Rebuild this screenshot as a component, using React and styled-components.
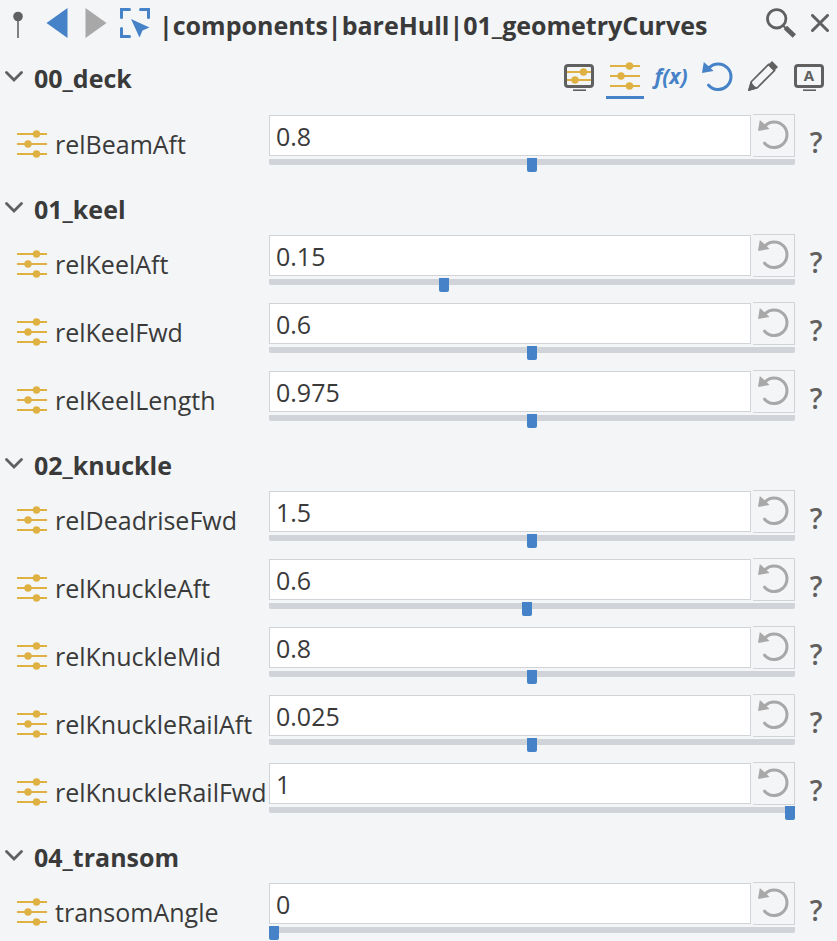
import { useState } from "react";
import styled, { createGlobalStyle } from "styled-components";

const colors = {
  background: "#f3f5f7",
  text: "#3a3a3a",
  icon: "#606060",
  muted: "#a8a8a8",
  line: "#d0d4d9",
  blue: "#4682c8",
  yellow: "#dfb142",
};

const groups = [
  {
    name: "00_deck",
    params: [{ name: "relBeamAft", value: "0.8", position: 50 }],
  },
  {
    name: "01_keel",
    params: [
      { name: "relKeelAft", value: "0.15", position: 33 },
      { name: "relKeelFwd", value: "0.6", position: 50 },
      { name: "relKeelLength", value: "0.975", position: 50 },
    ],
  },
  {
    name: "02_knuckle",
    params: [
      { name: "relDeadriseFwd", value: "1.5", position: 50 },
      { name: "relKnuckleAft", value: "0.6", position: 49 },
      { name: "relKnuckleMid", value: "0.8", position: 50 },
      { name: "relKnuckleRailAft", value: "0.025", position: 50 },
      { name: "relKnuckleRailFwd", value: "1", position: 100 },
    ],
  },
  {
    name: "04_transom",
    params: [{ name: "transomAngle", value: "0", position: 0 }],
  },
];

const PinIcon = () => (
  <svg width="12" height="30" viewBox="0 0 12 30">
    <path d="M6 8V30" stroke="#808080" strokeWidth="2" />
    <circle cx="6" cy="8.5" r="4.8" fill={colors.icon} />
  </svg>
);

const TriangleIcon = ({ forward }) => (
  <svg width="22" height="30" viewBox="0 0 22 30">
    {forward ? (
      <path d="M0.5 0L21.5 15L0.5 30Z" fill={colors.muted} />
    ) : (
      <path d="M21.5 0L0.5 15L21.5 30Z" fill={colors.blue} />
    )}
  </svg>
);

const PickIcon = () => (
  <svg width="30" height="30" viewBox="0 0 30 30">
    <path
      d="M1.5 9.5V1.5H9.5M20.5 1.5H28.5V9.5M1.5 20.5V28.5H9.5"
      fill="none"
      stroke={colors.blue}
      strokeWidth="3"
      strokeLinecap="round"
    />
    <path d="M11 11L29.5 19.5L22.5 22.5L19.5 29.5Z" fill={colors.blue} />
  </svg>
);

const SearchIcon = () => (
  <svg width="30" height="30" viewBox="0 0 30 30">
    <circle cx="10.7" cy="10.8" r="9.2" fill="none" stroke={colors.icon} strokeWidth="2.8" />
    <path d="M17 17.5L20 20.5" stroke={colors.icon} strokeWidth="2" />
    <path d="M19.4 19.6L28.3 28" stroke={colors.icon} strokeWidth="4.8" />
  </svg>
);

const CloseIcon = () => (
  <svg width="18" height="18" viewBox="0 0 18 18">
    <path
      d="M1.5 1.5L16.5 16.5M16.5 1.5L1.5 16.5"
      stroke={colors.icon}
      strokeWidth="3"
      strokeLinecap="round"
    />
  </svg>
);

const ChevronIcon = ({ open }) => (
  <svg width="18" height="12" viewBox="0 0 18 12">
    <path
      d={open ? "M1.5 1.5L9 9L16.5 1.5" : "M5 0L11 6L5 12"}
      fill="none"
      stroke={colors.icon}
      strokeWidth="2.8"
      strokeLinecap="round"
    />
  </svg>
);

const SlidersIcon = () => (
  <svg width="30" height="30" viewBox="0 0 30 30">
    <path d="M0 5H30M0 15H30M0 25H30" stroke={colors.yellow} strokeWidth="2" />
    <g fill={colors.yellow}>
      <circle cx="19.5" cy="5" r="3.7" />
      <circle cx="11" cy="15" r="3.7" />
      <circle cx="19.5" cy="25" r="3.7" />
    </g>
  </svg>
);

const MonitorIcon = ({ children }) => (
  <svg width="30" height="30" viewBox="0 0 30 30">
    {children}
    <rect x="1.5" y="4.5" width="27" height="21" rx="2.5" fill="none" stroke={colors.icon} strokeWidth="3" />
    <path d="M9 29.2H22" stroke={colors.icon} strokeWidth="1.6" />
  </svg>
);

const UndoIcon = ({ color }) => (
  <svg width="31" height="30" viewBox="0 0 31 30">
    <path
      d="M7 6.8A12.8 12.8 0 1 1 6.6 24.2"
      fill="none"
      stroke={color}
      strokeWidth="3"
      strokeLinecap="round"
    />
    <path d="M1.8 1L0 12L11.5 10L7.5 6Z" fill={color} />
  </svg>
);

const PencilIcon = () => (
  <svg width="30" height="30" viewBox="0 0 30 30">
    <path
      d="M3.5 20.5L20.5 3.5L26.5 9.5L9.5 26.5L1 29Z"
      fill="none"
      stroke={colors.icon}
      strokeWidth="1.7"
    />
    <path d="M0 30L2.6 20.5L9.6 27.4Z" fill={colors.icon} />
    <path d="M4.8 20.5L9.5 25.2L7 25.5L4.6 23Z" fill={colors.background} />
    <path d="M20 4L24 0L30 6L26 10Z" fill={colors.icon} />
  </svg>
);

const SliderParam = ({ param }) => {
  const [value, setValue] = useState(param.value);
  const [position, setPosition] = useState(param.position);

  const reset = () => {
    setValue(param.value);
    setPosition(param.position);
  };

  return (
    <ParamRow>
      <ParamLabel htmlFor={param.name}>
        <SlidersIcon />
        {param.name}
      </ParamLabel>
      <ParamControl>
        <ValueInput id={param.name} value={value} onChange={(e) => setValue(e.target.value)} />
        <ResetButton aria-label={`Reset ${param.name}`} onClick={reset}>
          <UndoIcon color={colors.muted} />
        </ResetButton>
        <RangeInput
          type="range"
          aria-label={param.name}
          value={position}
          onChange={(e) => setPosition(e.target.value)}
        />
      </ParamControl>
      <HelpButton aria-label={`Help for ${param.name}`}>?</HelpButton>
    </ParamRow>
  );
};

const Group = ({ group, children }) => {
  const [open, setOpen] = useState(true);

  return (
    <StyledGroup>
      <GroupHeader>
        <GroupTitle>
          <GroupToggle aria-expanded={open} onClick={() => setOpen(!open)}>
            <ChevronIcon open={open} />
            {group.name}
          </GroupToggle>
        </GroupTitle>
        {children}
      </GroupHeader>
      {open && (
        <ParamList $spaced={Boolean(children)}>
          {group.params.map((param) => (
            <SliderParam key={param.name} param={param} />
          ))}
        </ParamList>
      )}
    </StyledGroup>
  );
};

const ViewTools = () => (
  <ToolBar>
    <ToolButton aria-label="Show in dialog">
      <MonitorIcon>
        <path d="M2 11H28M2 19H28" stroke={colors.yellow} strokeWidth="2" />
        <circle cx="19.5" cy="11" r="3.7" fill={colors.yellow} />
        <circle cx="11" cy="19" r="3.7" fill={colors.yellow} />
      </MonitorIcon>
    </ToolButton>
    <ToolButton aria-label="Sliders" $active>
      <SlidersIcon />
    </ToolButton>
    <ToolButton>f(x)</ToolButton>
    <ToolButton aria-label="Reset all">
      <UndoIcon color={colors.blue} />
    </ToolButton>
    <ToolButton aria-label="Edit">
      <PencilIcon />
    </ToolButton>
    <ToolButton aria-label="Annotate">
      <MonitorIcon>
        <text x="15" y="20" textAnchor="middle" fontSize="15" fontWeight="700" fill={colors.icon}>
          A
        </text>
      </MonitorIcon>
    </ToolButton>
  </ToolBar>
);

export default function App() {
  return (
    <Panel>
      <GlobalStyle />
      <TitleBar>
        <TitleButtons>
          <IconButton aria-label="Pin">
            <PinIcon />
          </IconButton>
          <IconButton aria-label="Back">
            <TriangleIcon />
          </IconButton>
          <IconButton aria-label="Forward">
            <TriangleIcon forward />
          </IconButton>
          <IconButton aria-label="Select">
            <PickIcon />
          </IconButton>
        </TitleButtons>
        <Title>|components|bareHull|01_geometryCurves</Title>
        <TitleButtons>
          <IconButton aria-label="Search">
            <SearchIcon />
          </IconButton>
          <IconButton aria-label="Close">
            <CloseIcon />
          </IconButton>
        </TitleButtons>
      </TitleBar>
      {groups.map((group, index) => (
        <Group key={group.name} group={group}>
          {index === 0 && <ViewTools />}
        </Group>
      ))}
    </Panel>
  );
}

const GlobalStyle = createGlobalStyle`
  * {
    box-sizing: border-box;
  }

  body {
    margin: 0;
    background: ${colors.background};
  }

  body, button, input {
    font-family: "Open Sans", sans-serif;
    font-size: 25px;
    line-height: 32px;
    color: ${colors.text};
  }

  button {
    padding: 0;
    border: none;
    background: none;
    cursor: pointer;
  }

  svg {
    display: block;
    flex-shrink: 0;
  }
`;

const Panel = styled.main`
  min-height: 100vh;
`;

const TitleBar = styled.header`
  display: flex;
  gap: 7px;
  height: 52px;
  padding: 8px 0 0 1px;
`;

const TitleButtons = styled.div`
  display: flex;
  gap: 5px;
`;

const IconButton = styled.button`
  display: flex;
  align-items: center;
  justify-content: center;
  width: 34px;
  height: 30px;
`;

const Title = styled.h1`
  flex: 1;
  min-width: 0;
  margin: 0;
  overflow: hidden;
  font-size: 25px;
  line-height: 34px;
  white-space: nowrap;
`;

const StyledGroup = styled.section`
  & + & {
    margin-top: 18px;
  }
`;

const GroupHeader = styled.div`
  display: flex;
  align-items: center;
  justify-content: space-between;
  height: 51px;
  padding: 0 9px 0 5px;
`;

const GroupTitle = styled.h2`
  margin: 0;
  font-size: 25px;
`;

const GroupToggle = styled.button`
  display: flex;
  align-items: center;
  gap: 11px;
  font-weight: 700;

  svg {
    margin-bottom: 2px;
  }
`;

const ToolBar = styled.div`
  display: flex;
  gap: 8px;
  padding-bottom: 2px;
`;

const ToolButton = styled.button`
  display: flex;
  align-items: center;
  justify-content: center;
  width: 38px;
  height: 45px;
  padding-top: 2px;
  border-bottom: 3px solid ${({ $active }) => ($active ? colors.blue : "transparent")};
  color: ${colors.blue};
  font-size: 21px;
  font-style: italic;
  font-weight: 700;

  svg {
    font-style: normal;
  }
`;

const ParamList = styled.div`
  display: flex;
  flex-direction: column;
  gap: 17px;
  padding-top: ${({ $spaced }) => ($spaced ? "11px" : "0")};
`;

const ParamRow = styled.div`
  display: grid;
  grid-template-columns: 252px 1fr 42px;
  height: 51px;
  padding-left: 17px;
`;

const ParamLabel = styled.label`
  display: flex;
  gap: 8px;
  margin-top: 15px;
  line-height: 30px;
  white-space: nowrap;
`;

const ParamControl = styled.div`
  display: grid;
  grid-template-columns: 1fr 42px;
  grid-template-rows: 43px 6px;
  column-gap: 2px;
  row-gap: 2px;
`;

const ValueInput = styled.input`
  width: 100%;
  height: 41px;
  margin: 1px 0;
  padding: 0 6px;
  border: 1px solid ${colors.line};
  background: white;
  outline: none;
`;

const ResetButton = styled.button`
  display: flex;
  align-items: center;
  justify-content: center;
  padding-bottom: 3px;
  border: 1px solid ${colors.line};
  border-left: none;
`;

const RangeInput = styled.input`
  grid-column: 1 / -1;
  width: 100%;
  height: 6px;
  margin: 0;
  appearance: none;
  border-radius: 0 0 2px 2px;
  background: ${colors.line};

  &::-webkit-slider-runnable-track {
    height: 6px;
  }

  &::-webkit-slider-thumb {
    width: 10px;
    height: 14px;
    margin-top: -1px;
    appearance: none;
    border-radius: 0 0 2px 2px;
    background: ${colors.blue};
  }
`;

const HelpButton = styled.button`
  height: 55px;
  color: ${colors.icon};
  font-size: 28px;
  font-weight: 600;
`;
